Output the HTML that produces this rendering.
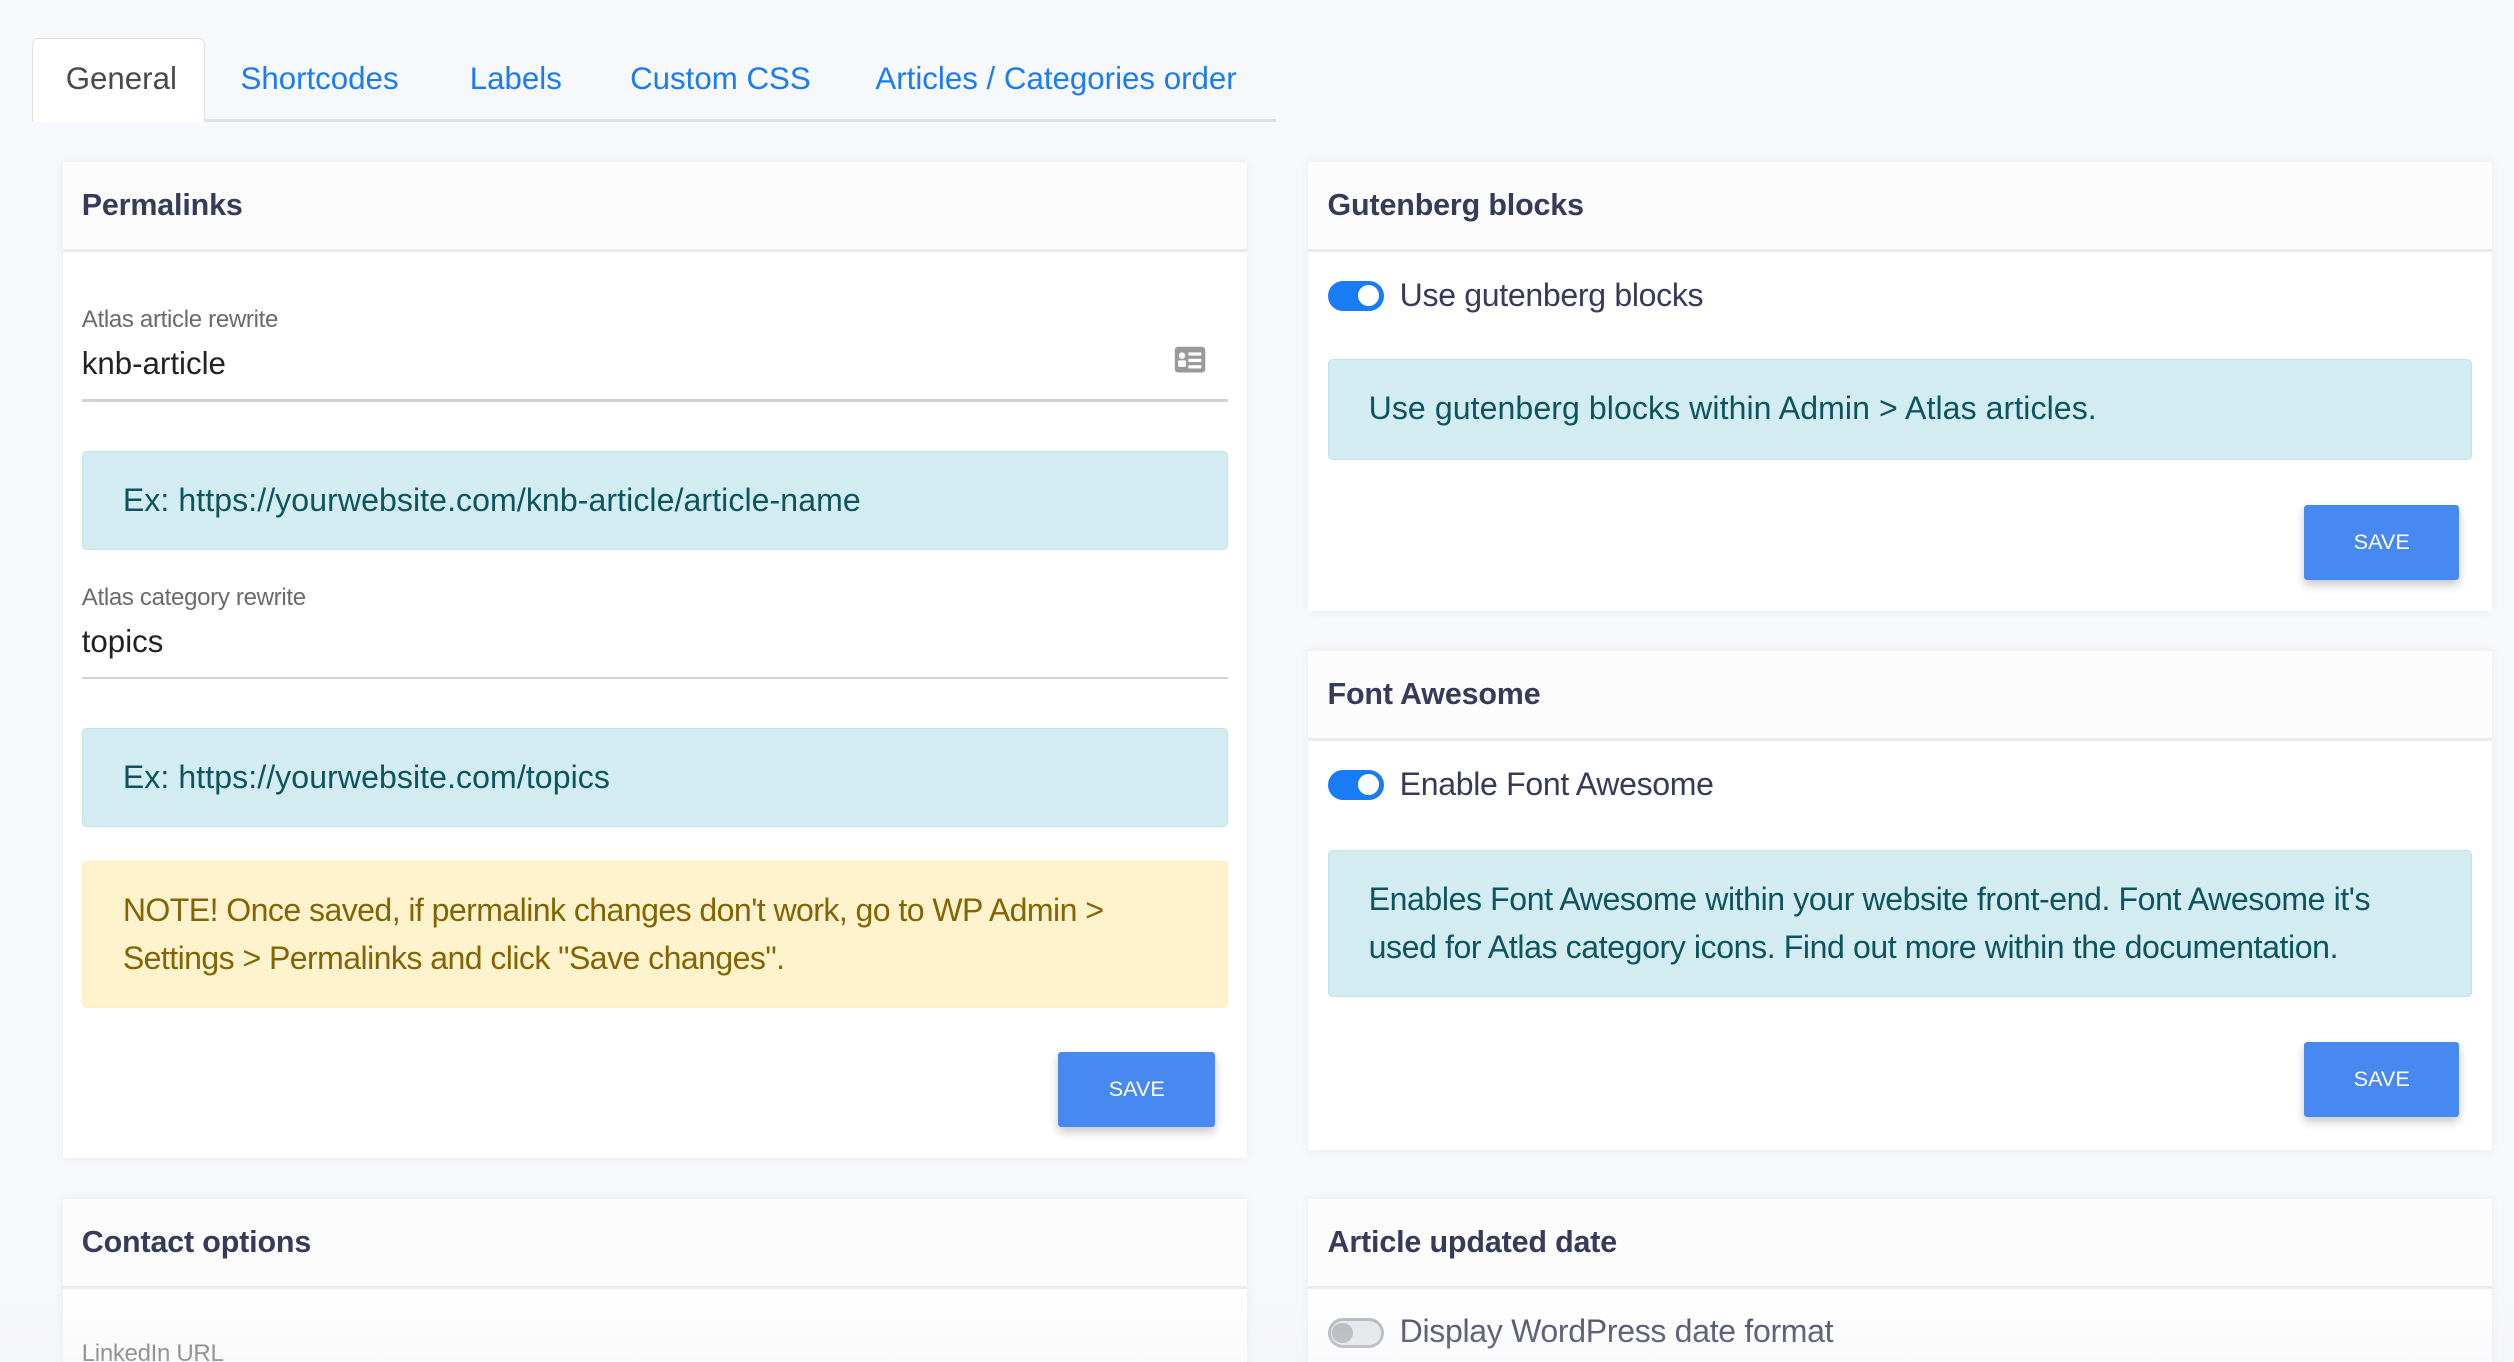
<!DOCTYPE html>
<html><head><meta charset="utf-8"><style>
*{box-sizing:border-box;margin:0;padding:0}
html,body{width:2514px;height:1362px;overflow:hidden;background:#f7f8fc}
#w{zoom:1.60332;position:relative;width:1568px;height:849.5px;font-family:"Liberation Sans",sans-serif;color:#363b59}
.a{position:absolute;white-space:nowrap}
.tab{font-size:19.5px;color:#1a7cf5;letter-spacing:0}
.card{position:absolute;background:#fff;box-shadow:0 0 6px rgba(0,0,0,.06)}
.hd{position:absolute;left:0;right:0;top:0;height:56px;background:#fcfcfd;border-bottom:2px solid #eaebef}
.hd span{position:absolute;left:12px;top:16px;font-size:19px;font-weight:bold;color:#363b59;letter-spacing:-0.1px}
.lbl{font-size:15px;color:#6b6b6b;letter-spacing:-0.2px}
.val{font-size:19.5px;color:#222;letter-spacing:0}
.ul{position:absolute;height:1.5px;background:#cfd2d6}
.info{position:absolute;background:#d2ecf1;border:1px solid #bfe4ea;border-radius:3px;color:#0c5460;font-size:20px;letter-spacing:0.05px;padding-left:25px;line-height:30px}
.warn{position:absolute;background:#fff3cd;border:1px solid #ffeeba;border-radius:3px;color:#856404;font-size:20px;letter-spacing:-0.35px;padding-left:25px;line-height:30px}
.btn{position:absolute;width:98px;height:47px;background:#4789f1;color:#fff;font-size:13.5px;text-align:center;line-height:46px;box-shadow:0 3px 6px rgba(0,0,0,.22);border-radius:2px}
.tg{position:absolute;width:35px;height:19px;border-radius:10px;background:#1a7cf5}
.tg::after{content:"";position:absolute;right:3px;top:3px;width:13px;height:13px;border-radius:50%;background:#fff}
.tg.off{background:#e4e6e9;border:2px solid #adb2b8}
.tg.off::after{left:1px;right:auto;top:1px;width:13px;height:13px;background:#adb2b8}
.tt{font-size:20px;color:#363b59;letter-spacing:-0.2px}
</style></head><body><div id="w">
<div class="a" style="left:20px;top:24px;width:108px;height:52px;background:#fff;border:1px solid #dde0e5;border-bottom:none;border-radius:4px 4px 0 0"></div>
<div class="a" style="left:128px;top:74px;width:668px;height:2px;background:#dde0e5"></div>
<div class="a tab" style="left:41px;top:38px;color:#4a4a4a">General</div>
<div class="a tab" style="left:150px;top:38px">Shortcodes</div>
<div class="a tab" style="left:293px;top:38px">Labels</div>
<div class="a tab" style="left:393px;top:38px">Custom CSS</div>
<div class="a tab" style="left:546px;top:38px">Articles / Categories order</div>

<div class="card" style="left:39px;top:101px;width:739px;height:621px">
<div class="hd"><span>Permalinks</span></div>
<div class="a lbl" style="left:12px;top:90px">Atlas article rewrite</div>
<div class="a val" style="left:12px;top:115px">knb-article</div>
<svg class="a" style="left:693px;top:115px" width="20" height="17" viewBox="0 0 20 17"><rect x="0.5" y="0.5" width="19" height="16" rx="2" fill="#9a9a9a"/><rect x="9" y="4" width="8" height="2" fill="#fff"/><rect x="9" y="8" width="8" height="2" fill="#fff"/><rect x="9" y="12" width="8" height="2" fill="#fff"/><circle cx="5" cy="6" r="2" fill="#fff"/><rect x="2.5" y="9" width="5" height="4" rx="1" fill="#fff"/></svg>
<div class="ul" style="left:12px;top:148px;width:715px"></div>
<div class="info" style="left:12px;top:180px;width:715px;height:62px;padding-top:15px">Ex: https://yourwebsite.com/knb-article/article-name</div>
<div class="a lbl" style="left:12px;top:263px">Atlas category rewrite</div>
<div class="a val" style="left:12px;top:288px">topics</div>
<div class="ul" style="left:12px;top:321px;width:715px"></div>
<div class="info" style="left:12px;top:353px;width:715px;height:62px;padding-top:15px">Ex: https://yourwebsite.com/topics</div>
<div class="warn" style="left:12px;top:436px;width:715px;height:92px;padding-top:15px">NOTE! Once saved, if permalink changes don't work, go to WP Admin &gt;<br>Settings &gt; Permalinks and click "Save changes".</div>
<div class="btn" style="left:621px;top:555px">SAVE</div>
</div>

<div class="card" style="left:816px;top:101px;width:738px;height:280px">
<div class="hd"><span>Gutenberg blocks</span></div>
<div class="tg" style="left:12px;top:74px"></div>
<div class="a tt" style="left:57px;top:72px">Use gutenberg blocks</div>
<div class="info" style="left:12px;top:123px;width:714px;height:63px;padding-top:15px">Use gutenberg blocks within Admin &gt; Atlas articles.</div>
<div class="btn" style="left:621px;top:214px;width:97px">SAVE</div>
</div>

<div class="card" style="left:816px;top:406px;width:738px;height:311px">
<div class="hd"><span>Font Awesome</span></div>
<div class="tg" style="left:12px;top:74px"></div>
<div class="a tt" style="left:57px;top:72px">Enable Font Awesome</div>
<div class="info" style="left:12px;top:124px;width:714px;height:92px;padding-top:15px;letter-spacing:-0.25px">Enables Font Awesome within your website front-end. Font Awesome it's<br>used for Atlas category icons. Find out more within the documentation.</div>
<div class="btn" style="left:621px;top:244px;width:97px">SAVE</div>
</div>

<div class="card" style="left:39px;top:748px;width:739px;height:110px">
<div class="hd"><span>Contact options</span></div>
<div class="a lbl" style="left:12px;top:88px">LinkedIn URL</div>
</div>
<div class="card" style="left:816px;top:748px;width:738px;height:110px">
<div class="hd"><span>Article updated date</span></div>
<div class="tg off" style="left:12px;top:74px"></div>
<div class="a tt" style="left:57px;top:71px">Display WordPress date format</div>
</div>
<div class="a" style="left:0;top:800px;width:1568px;height:50px;background:linear-gradient(rgba(240,241,244,0),rgba(240,241,244,.35))"></div>
</div></body></html>
